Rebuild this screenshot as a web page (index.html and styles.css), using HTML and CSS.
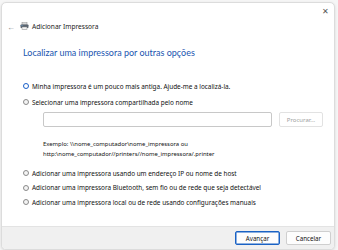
FILE: index.html
```html
<!DOCTYPE html>
<html lang="pt-BR">
<head>
  <meta charset="UTF-8">
  <title>Adicionar Impressora</title>
  <link rel="stylesheet" href="styles.css">
</head>
<body>
  <div class="window">
    <div class="titlebar">
      <span class="close">&#x2715;</span>
    </div>
    <div class="nav">
      <span class="back">&#x2190;</span>
      <svg class="printer" width="9" height="8" viewBox="0 0 9 8">
        <rect x="2" y="0" width="5" height="3" fill="#d8d8d8" stroke="#888" stroke-width="0.5"/>
        <rect x="0.5" y="2.5" width="8" height="3.5" rx="0.7" fill="#5a6470"/>
        <rect x="2" y="5" width="5" height="2.7" fill="#f4f4f4" stroke="#888" stroke-width="0.5"/>
        <rect x="1.5" y="3.4" width="1" height="0.6" fill="#6fc0ff"/>
      </svg>
      <span class="nav-title">Adicionar Impressora</span>
    </div>

    <div class="content">
      <h1>Localizar uma impressora por outras opções</h1>

      <div class="options">
        <label class="option"><span class="radio checked"></span>Minha impressora é um pouco mais antiga. Ajude-me a localizá-la.</label>
        <label class="option"><span class="radio"></span>Selecionar uma impressora compartilhada pelo nome</label>
        <div class="share">
          <div class="share-row">
            <div class="input"></div>
            <div class="browse">Procurar...</div>
          </div>
          <p class="example">Exemplo: \\nome_computador\nome_impressora ou<br>http:\nome_computador//printers//nome_impressora/.printer</p>
        </div>
        <label class="option short"><span class="radio"></span>Adicionar uma impressora usando um endereço IP ou nome de host</label>
        <label class="option short"><span class="radio"></span>Adicionar uma impressora Bluetooth, sem fio ou de rede que seja detectável</label>
        <label class="option short"><span class="radio"></span>Adicionar uma impressora local ou de rede usando configurações manuais</label>
      </div>
    </div>

    <div class="footer">
      <div class="btn primary">Avançar</div>
      <div class="btn">Cancelar</div>
    </div>
  </div>
</body>
</html>
```

FILE: styles.css
```css
html, body {
  margin: 0;
  height: 100%;
}
body {
  background: #f6f6f6;
  font-family: "Noto Sans", "Open Sans", sans-serif;
  color: #111;
  padding: 2px 3px 2px 1px;
  box-sizing: border-box;
}
.window {
  height: 100%;
  background: #fff;
  border: 1px solid #dcdcdc;
  border-radius: 5px;
  box-shadow: 0 1px 3px rgba(0, 0, 0, 0.12);
  display: flex;
  flex-direction: column;
  overflow: hidden;
}
.titlebar {
  height: 14px;
  display: flex;
  justify-content: flex-end;
  align-items: center;
  padding-right: 5px;
}
.close {
  font-size: 8px;
  color: #555;
  line-height: 1;
  margin-top: 2px;
}
.nav {
  display: flex;
  align-items: center;
  height: 18px;
  padding-left: 5px;
}
.back {
  font-size: 8px;
  color: #888;
  width: 13px;
}
.printer {
  margin-right: 3px;
}
.nav-title {
  font-size: 6.6px;
  color: #222;
}
.content {
  flex: 1;
  padding: 12px 0 0 21px;
}
h1 {
  margin: 0 0 20px;
  font-family: Lato, "Noto Sans", sans-serif;
  font-size: 9px;
  font-weight: 400;
  color: #1a55b0;
}
.option {
  display: flex;
  align-items: center;
  font-size: 6.4px;
  height: 16px;
}
.option.short {
  height: 14.5px;
}
.radio {
  width: 6px;
  height: 6px;
  border: 1px solid #8a8a8a;
  border-radius: 50%;
  margin-right: 3px;
  box-sizing: border-box;
  background: #f4f4f4;
}
.radio.checked {
  border: 1.5px solid #1a5fc8;
  background: #fff;
}
.share {
  padding-left: 20px;
  padding-right: 11px;
}
.share-row {
  display: flex;
  gap: 7px;
  margin-top: 2px;
}
.input {
  flex: 1;
  height: 15px;
  border: 1px solid #c8c8c8;
  border-radius: 2px;
  box-sizing: border-box;
}
.browse {
  width: 44px;
  height: 15px;
  border: 1px solid #e2e2e2;
  border-radius: 2px;
  box-sizing: border-box;
  font-size: 6px;
  color: #a0a0a0;
  display: flex;
  align-items: center;
  justify-content: center;
}
.example {
  margin: 12px 0 7px;
  font-size: 5.9px;
  line-height: 10px;
}
.footer {
  height: 22px;
  background: #f0f0f0;
  border-top: 1px solid #e3e3e3;
  display: flex;
  justify-content: flex-end;
  align-items: center;
  gap: 6px;
  padding-right: 3px;
}
.btn {
  width: 43px;
  height: 12px;
  background: #fdfdfd;
  border: 1px solid #cfcfcf;
  border-radius: 2px;
  font-size: 6.2px;
  display: flex;
  align-items: center;
  justify-content: center;
}
.btn.primary {
  border-color: #1a62c4;
  box-shadow: inset 0 0 0 0.5px #1a62c4;
}
```
